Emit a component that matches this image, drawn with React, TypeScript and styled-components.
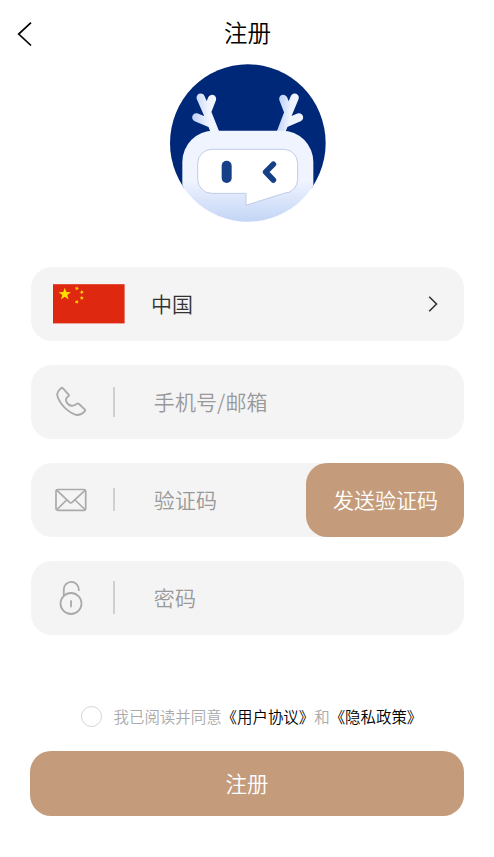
import React from "react";
import styled, { createGlobalStyle } from "styled-components";

const GlobalStyle = createGlobalStyle`
  *, *::before, *::after { box-sizing: border-box; }
  html, body { margin: 0; padding: 0; background: #fff; }
  body, button, input {
    font-family: "Noto Sans CJK SC", "Noto Sans", sans-serif;
    font-weight: 350;
  }
  button { border: 0; padding: 0; background: none; cursor: pointer; }
`;

const Screen = styled.main`
  display: flex;
  flex-direction: column;
  width: 494px;
  height: 857px;
  overflow: hidden;
  background: #fff;
`;

const Header = styled.header`
  display: grid;
  grid-template-columns: 60px 1fr 60px;
  align-items: center;
  height: 55px;
  padding-top: 11px;
  flex: none;
`;

const BackButton = styled.button`
  display: flex;
  width: 40px;
  height: 44px;
  padding: 2px 0 0 17px;
  align-items: center;
`;

const Title = styled.h1`
  margin: 0;
  padding: 0 0 2px 1px;
  text-align: center;
  font-size: 23.5px;
  line-height: 42px;
  font-weight: 350;
  color: #000;
`;

const LogoArea = styled.div`
  display: flex;
  height: 176px;
  padding-left: 160px;
  flex: none;
`;

const Form = styled.form`
  display: flex;
  flex-direction: column;
  gap: 24.1px;
  padding: 35.7px 29.6px 0 30.6px;
`;

const Field = styled.div`
  display: flex;
  align-items: center;
  height: 74px;
  border-radius: 21px;
  background: #f4f4f4;
  overflow: hidden;
`;

const CountryField = styled(Field)`
  padding: 0 25px 0 22.4px;
`;

const CountryName = styled.span`
  flex: 1;
  margin-left: 26px;
  padding-bottom: 2px;
  font-size: 21px;
  line-height: 30px;
  color: #333;
`;

const FieldIcon = styled.span`
  display: flex;
  flex: none;
  width: 82.4px;
  padding-right: 1px;
  justify-content: center;
`;

const Divider = styled.span<{ $height: number }>`
  flex: none;
  width: 2px;
  height: ${(p) => p.$height}px;
  background: #d0d0d0;
`;

const Input = styled.input`
  flex: 1;
  min-width: 0;
  height: 40px;
  margin-left: 38.8px;
  padding: 0 0 2px;
  border: 0;
  outline: 0;
  background: transparent;
  font-size: 21px;
  letter-spacing: 0.1px;
  color: #333;
  &::placeholder { color: #999; opacity: 1; }
`;

const SendButton = styled.button`
  flex: none;
  width: 158.6px;
  height: 74px;
  border-radius: 21px;
  background: #c49c7c;
  color: #fff;
  font-size: 21px;
  padding: 0 0 2px 1px;
`;

const Agreement = styled.div`
  display: flex;
  align-items: center;
  height: 24px;
  margin: 69.5px 0 0 81px;
  font-size: 15.45px;
  line-height: 24px;
  color: #aaa;
  white-space: nowrap;
`;

const Radio = styled.button`
  width: 21px;
  height: 21px;
  margin-right: 11.5px;
  border: 1px solid #d4d4d4;
  border-radius: 50%;
`;

const PolicyLink = styled.span`
  color: #000;
`;

const SubmitButton = styled.button`
  flex: none;
  height: 65px;
  margin: 22.4px 29.6px 0 30.4px;
  padding: 0 1px 2px 0;
  border-radius: 21px;
  background: #c49c7c;
  color: #fff;
  font-size: 21.5px;
`;

const Logo = () => (
  <svg width="176" height="176" viewBox="0 0 528 528" fill="none">
    <defs>
      <clipPath id="disc"><ellipse cx="263.5" cy="264" rx="233.5" ry="236" /></clipPath>
      <linearGradient id="body" x1="0" y1="375" x2="0" y2="500" gradientUnits="userSpaceOnUse">
        <stop stopColor="#f0f4ff" />
        <stop offset="1" stopColor="#c3d5f6" />
      </linearGradient>
      <linearGradient id="antlerLeft" x1="98" y1="190" x2="158" y2="190" gradientUnits="userSpaceOnUse">
        <stop stopColor="#c0d1f5" />
        <stop offset=".8" stopColor="#f0f4ff" />
      </linearGradient>
      <linearGradient id="antlerRight" x1="356" y1="190" x2="405" y2="196" gradientUnits="userSpaceOnUse">
        <stop stopColor="#c4d5f7" />
        <stop offset=".7" stopColor="#f0f4ff" />
      </linearGradient>
    </defs>
    <g clipPath="url(#disc)">
      <path d="M0 0H528V400H0Z" fill="#002878" />
      <g stroke="url(#antlerLeft)" strokeWidth="25" strokeLinecap="round" strokeLinejoin="round">
        <path d="M122 128L143 176L166 234M156 132L142 168M109 187L152 205" />
      </g>
      <g stroke="url(#antlerRight)" strokeWidth="25" strokeLinecap="round" strokeLinejoin="round">
        <path d="M404 128L384 176L362 234M370 132L384 168M417 187L375 205" />
      </g>
      <path d="M67 520V321A94 94 0 0 1 161 227H366A94 94 0 0 1 460 321V520Z" fill="url(#body)" />
    </g>
    <path
      d="M155 283H371A42 42 0 0 1 413 325V373A42 42 0 0 1 371 415L258 451V415H155A42 42 0 0 1 113 373V325A42 42 0 0 1 155 283Z"
      fill="#fff" stroke="#bfcce8" strokeWidth="3"
    />
    <rect x="185" y="317" width="30" height="67" rx="15" fill="#153f86" />
    <path d="M340 328L317 351L340 375" stroke="#153f86" strokeWidth="17" strokeLinecap="round" strokeLinejoin="round" />
  </svg>
);

const BackIcon = () => (
  <svg width="16" height="26" viewBox="0 0 16 26" fill="none" stroke="#000" strokeWidth="1.7">
    <path d="M14 1.7L1.7 13L14 24.5" />
  </svg>
);

const ChevronIcon = () => (
  <svg width="12" height="18" viewBox="0 0 12 18" fill="none" stroke="#333" strokeWidth="1.6">
    <path d="M2.2 1.8L9.5 9L2.2 16.2" />
  </svg>
);

const star = (cx: number, cy: number, r: number, turn = 0) =>
  Array.from({ length: 10 }, (_, i) => {
    const a = ((i * 36 - 90 + turn) * Math.PI) / 180;
    const d = i % 2 ? r * 0.4 : r;
    return `${(cx + d * Math.cos(a)).toFixed(2)},${(cy + d * Math.sin(a)).toFixed(2)}`;
  }).join(" ");

const Flag = () => (
  <svg width="72" height="40" viewBox="0 0 72 40">
    <rect y=".2" width="71.6" height="39.2" fill="#de2910" />
    <g fill="#ffde00">
      <polygon points={star(11.8, 10.2, 6.5)} />
      <polygon points={star(23.8, 4.3, 2.3, 20)} />
      <polygon points={star(28.8, 8.2, 2.3, 45)} />
      <polygon points={star(28.8, 14, 2.3)} />
      <polygon points={star(23.8, 17.9, 2.3, 20)} />
    </g>
  </svg>
);

const PhoneIcon = () => (
  <svg width="32" height="32" viewBox="0 0 96 96" fill="none" stroke="#aaa" strokeWidth="5.5" strokeLinejoin="round">
    <path d="M19 6Q21 4 24 7L41 26Q43 29 40 31Q29 38 35 49Q42 61 54 59Q60 58 66 53Q69 51 72 54L90 71Q92 74 89 76Q78 88 65 87Q49 84 29 65Q12 47 7 29Q5 17 19 6Z" />
  </svg>
);

const MailIcon = () => (
  <svg width="32" height="24" viewBox="0 0 32 24" fill="none" stroke="#aaa" strokeWidth="1.7" strokeLinejoin="round">
    <rect x="1" y="1.5" width="29.7" height="20.8" rx="1.8" />
    <path d="M2 2.3L14.3 14.2Q15.8 15.8 17.3 14.2L30 2.3M2 21.5L11.6 12M30 21.5L20 12" />
  </svg>
);

const LockIcon = () => (
  <svg width="24" height="36" viewBox="0 0 24 36" fill="none" stroke="#aaa" strokeWidth="1.8" strokeLinecap="round">
    <circle cx="12" cy="23.5" r="10.5" />
    <path d="M4.8 15.5V9.5A7.5 7.5 0 0 1 19.8 9.4V10.2M12 21V26.5" />
  </svg>
);

export default function App() {
  return (
    <>
      <GlobalStyle />
      <Screen>
        <Header>
          <BackButton type="button" aria-label="返回"><BackIcon /></BackButton>
          <Title>注册</Title>
        </Header>
        <LogoArea><Logo /></LogoArea>
        <Form>
          <CountryField>
            <Flag />
            <CountryName>中国</CountryName>
            <ChevronIcon />
          </CountryField>
          <Field>
            <FieldIcon><PhoneIcon /></FieldIcon>
            <Divider $height={30} />
            <Input placeholder="手机号/邮箱" />
          </Field>
          <Field>
            <FieldIcon><MailIcon /></FieldIcon>
            <Divider $height={23} />
            <Input placeholder="验证码" />
            <SendButton type="button">发送验证码</SendButton>
          </Field>
          <Field>
            <FieldIcon><LockIcon /></FieldIcon>
            <Divider $height={33} />
            <Input type="password" placeholder="密码" />
          </Field>
        </Form>
        <Agreement>
          <Radio type="button" aria-label="同意协议" />
          <span>我已阅读并同意</span>
          <PolicyLink>《用户协议》</PolicyLink>
          <span>和</span>
          <PolicyLink>《隐私政策》</PolicyLink>
        </Agreement>
        <SubmitButton type="button">注册</SubmitButton>
      </Screen>
    </>
  );
}
